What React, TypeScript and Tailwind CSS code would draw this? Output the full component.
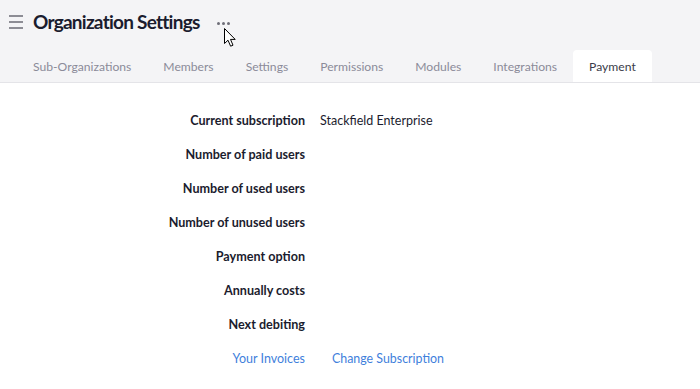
import React from "react";

const tabs = ["Sub-Organizations", "Members", "Settings", "Permissions", "Modules", "Integrations", "Payment"];
const rows: [string, string][] = [
  ["Current subscription", "Stackfield Enterprise"],
  ["Number of paid users", ""],
  ["Number of used users", ""],
  ["Number of unused users", ""],
  ["Payment option", ""],
  ["Annually costs", ""],
  ["Next debiting", ""],
];

export default function App() {
  return (
    <div className="w-[700px] h-[389px] bg-white relative overflow-hidden" style={{ fontFamily: "Lato, 'Noto Sans', sans-serif" }}>
      <div className="bg-[#f4f4f6] border-b border-[#e4e4e8]">
        <div className="h-[44px] flex items-center pl-[9px]">
          <div className="flex flex-col gap-[4px] w-[14px]">
            <div className="h-[2px] bg-[#8d8d95]" />
            <div className="h-[2px] bg-[#8d8d95]" />
            <div className="h-[2px] bg-[#8d8d95]" />
          </div>
          <h1 className="ml-[10px] text-[19px] font-bold text-[#1b1c2e] tracking-[-0.75px]">Organization Settings</h1>
          <div className="ml-[17px] mt-[2px] flex gap-[2px]">
            <span className="w-[3px] h-[3px] rounded-full bg-[#6e6e78]" />
            <span className="w-[3px] h-[3px] rounded-full bg-[#6e6e78]" />
            <span className="w-[3px] h-[3px] rounded-full bg-[#6e6e78]" />
          </div>
        </div>
        <div className="mt-[6px] flex pl-[17px]">
          {tabs.map((t) => (
            <div
              key={t}
              className={
                "h-[32px] px-4 pt-[3px] flex items-center text-[12.15px] rounded-t-[4px] " +
                (t === "Payment" ? "bg-white text-[#3b3c4a]" : "text-[#8b8b99]")
              }
            >
              {t}
            </div>
          ))}
        </div>
      </div>
      <div className="pt-[21px]">
        {rows.map(([l, v]) => (
          <div key={l} className="h-[34px] flex items-center">
            <div className="w-[305px] text-right text-[12.6px] font-bold text-[#1b1c2e]">{l}</div>
            <div className="ml-[15px] text-[12.5px] text-[#1b1c2e]">{v}</div>
          </div>
        ))}
        <div className="h-[34px] flex items-center">
          <div className="w-[305px] text-right text-[12.5px] text-[#3f7fdc]">Your Invoices</div>
          <div className="ml-[27px] text-[12.4px] text-[#3f7fdc]">Change Subscription</div>
        </div>
      </div>
      <svg className="absolute left-[224px] top-[28px]" width="14" height="20" viewBox="0 0 14 20">
        <path d="M0.5 0.5 L0.5 15.5 L4 12.2 L6.6 18.2 L9 17.2 L6.5 11.4 L11.2 11.4 Z" fill="white" stroke="black" strokeWidth="1" strokeLinejoin="miter" />
      </svg>
    </div>
  );
}
